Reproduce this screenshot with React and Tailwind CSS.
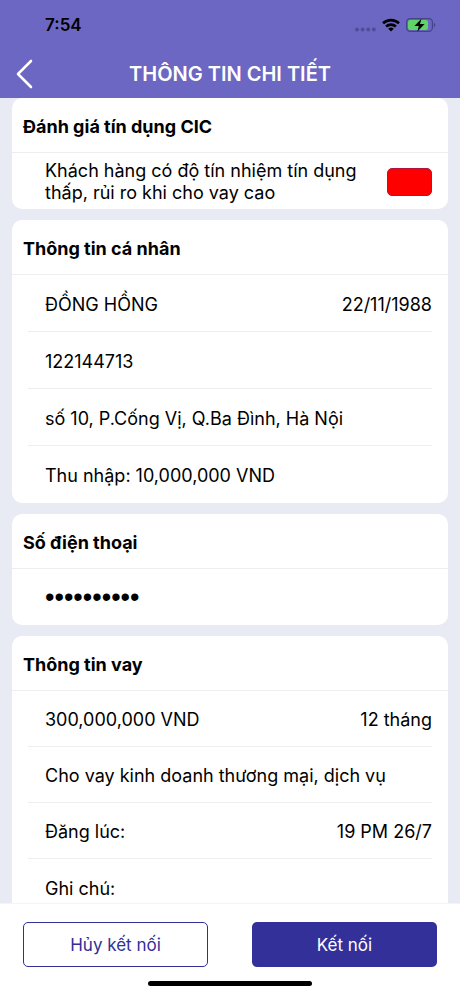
import React from 'react'

const personalInfo = [
  { label: 'ĐỒNG HỒNG', value: '22/11/1988' },
  { label: '122144713' },
  { label: 'số 10, P.Cống Vị, Q.Ba Đình, Hà Nội' },
  { label: 'Thu nhập: 10,000,000 VND' }
]

const loanInfo = [
  { label: '300,000,000 VND', value: '12 tháng' },
  { label: 'Cho vay kinh doanh thương mại, dịch vụ' },
  { label: 'Đăng lúc:', value: '19 PM 26/7' },
  { label: 'Ghi chú:' }
]

const StatusBar = () => (
  <div className="flex h-[50px] items-center justify-between pl-[45px] pr-6">
    <span className="text-[17px] font-semibold text-black">7:54</span>
    <div className="flex items-center gap-1.5">
      <svg width="22" height="14" viewBox="0 0 22 14" fill="#4f4c98" aria-hidden="true">
        <circle cx="3" cy="11.5" r="1.9" />
        <circle cx="8.6" cy="11.5" r="1.9" />
        <circle cx="14.2" cy="11.5" r="1.9" />
        <circle cx="19.8" cy="11.5" r="1.9" />
      </svg>
      <svg width="18" height="14" viewBox="0 0 18 14" fill="none" stroke="#000" strokeWidth="2.6" aria-hidden="true">
        <path d="M1 5.3a11.6 11.6 0 0 1 16 0" />
        <path d="M4.1 8.5a7.2 7.2 0 0 1 9.8 0" />
        <path d="M9 13.6 6.2 10.8a4 4 0 0 1 5.6 0Z" fill="#000" stroke="none" />
      </svg>
      <svg width="30" height="14" viewBox="0 0 30 14" aria-hidden="true">
        <rect x="0.6" y="0.6" width="25.8" height="12.8" rx="3.6" fill="none" stroke="#46438a" strokeWidth="1.2" />
        <rect x="2" y="2" width="20" height="10" rx="2.2" fill="#5fd366" />
        <path d="M27.8 4.8a2.4 2.4 0 0 1 0 4.4Z" fill="#46438a" />
        <path d="M15.4 0.8 8.4 8h4.4l-1.4 5.6L18.6 6h-4.6Z" fill="#000" />
      </svg>
    </div>
  </div>
)

const Card = ({ title, children }) => (
  <section className="rounded-[10px] bg-white">
    <h2 className="flex h-[55px] items-center border-b border-[#eceef2] px-[11px] pt-[3px] text-lg font-bold">
      {title}
    </h2>
    {children}
  </section>
)

const InfoList = ({ items, compact = false }) => (
  <ul className="divide-y divide-[#eceef2] px-4">
    {items.map((item) => (
      <li
        key={item.label}
        className={`flex items-center justify-between pl-[17px] pt-[3px] ${compact ? 'h-14' : 'h-[57px]'}`}
      >
        <span>{item.label}</span>
        {item.value && <span>{item.value}</span>}
      </li>
    ))}
  </ul>
)

const App = () => {
  return (
    <div className="flex h-screen flex-col bg-[#e9ebf4] font-['Inter','Liberation_Sans',sans-serif] text-lg text-black">
      <header className="shrink-0 bg-[#6b67c2] text-white">
        <StatusBar />
        <div className="grid h-12 grid-cols-[48px_1fr_48px] items-center">
          <button type="button" aria-label="Quay lại" className="flex h-12 items-center pl-4">
            <svg width="18" height="30" viewBox="0 0 18 30" fill="none" stroke="#fff" strokeWidth="2.6" strokeLinecap="round" strokeLinejoin="round">
              <path d="M15 2 2 15l13 13" />
            </svg>
          </button>
          <h1 className="text-center text-xl font-semibold">THÔNG TIN CHI TIẾT</h1>
        </div>
      </header>

      <main className="flex min-h-0 flex-1 flex-col gap-[11px] overflow-y-auto px-3 [scrollbar-width:none]">
        <Card title="Đánh giá tín dụng CIC">
          <div className="flex h-14 items-center justify-between gap-4 pl-[33px] pr-4 pt-0.5">
            <p className="leading-[22px]">Khách hàng có độ tín nhiệm tín dụng thấp, rủi ro khi cho vay cao</p>
            <div className="h-7 w-[45px] shrink-0 rounded-[5px] border border-[#b3123f] bg-[#ff0000]"></div>
          </div>
        </Card>

        <Card title="Thông tin cá nhân">
          <InfoList items={personalInfo} />
        </Card>

        <Card title="Số điện thoại">
          <div className="flex h-14 items-center pl-[33px] font-['Liberation_Sans',sans-serif] text-[27px]">••••••••••</div>
        </Card>

        <Card title="Thông tin vay">
          <InfoList items={loanInfo} compact />
        </Card>
      </main>

      <footer className="shrink-0 border-t border-[#f3f4f7] bg-white pb-2.5">
        <div className="grid grid-cols-2 gap-11 px-[23px] pt-[18px]">
          <button type="button" className="h-[45px] rounded-[5px] border border-[#322f95] pt-0.5 text-[17px] text-[#322f95]">
            Hủy kết nối
          </button>
          <button type="button" className="h-[45px] rounded-[5px] bg-[#333199] pt-0.5 text-[17px] text-white">
            Kết nối
          </button>
        </div>
        <div className="mx-auto mt-3.5 h-[5px] w-[164px] rounded-full bg-black"></div>
      </footer>
    </div>
  )
}

export default App
